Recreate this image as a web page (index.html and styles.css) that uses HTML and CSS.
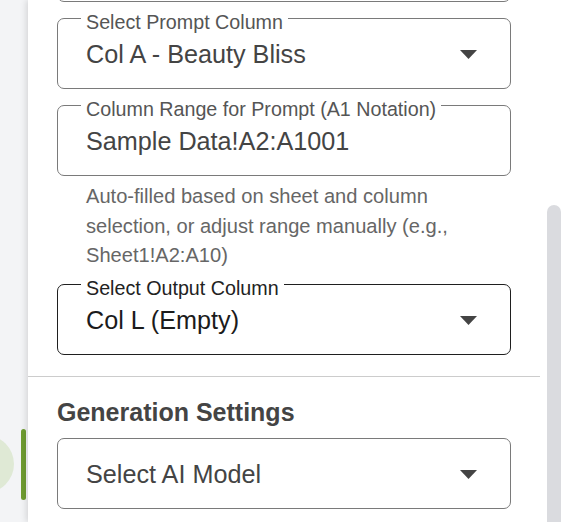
FILE: index.html
```html
<!DOCTYPE html>
<html lang="en">
<head>
<meta charset="utf-8">
<title>Settings panel</title>
<link rel="stylesheet" href="styles.css">
</head>
<body>
<div class="app">
  <aside class="rail">
    <div class="rail-marker">
      <span class="rail-circle"></span>
      <span class="rail-bar"></span>
    </div>
  </aside>
  <main class="panel">
    <div class="content">
      <section class="section">
        <div class="field prev"></div>
        <div class="field">
          <span class="field-label">Select Prompt Column</span>
          <div class="field-value">
            <span>Col A - Beauty Bliss</span>
            <svg class="arrow" width="17" height="9" viewBox="0 0 17 9"><polygon points="0,0 17,0 8.5,9"/></svg>
          </div>
        </div>
        <div class="field">
          <span class="field-label">Column Range for Prompt (A1 Notation)</span>
          <div class="field-value"><span>Sample Data!A2:A1001</span></div>
        </div>
        <p class="helper">Auto-filled based on sheet and column selection, or adjust range manually (e.g., Sheet1!A2:A10)</p>
        <div class="field active">
          <span class="field-label">Select Output Column</span>
          <div class="field-value">
            <span>Col L (Empty)</span>
            <svg class="arrow" width="17" height="9" viewBox="0 0 17 9"><polygon points="0,0 17,0 8.5,9"/></svg>
          </div>
        </div>
      </section>
      <hr class="divider">
      <section class="section">
        <h2 class="heading">Generation Settings</h2>
        <div class="field">
          <div class="field-value">
            <span>Select AI Model</span>
            <svg class="arrow" width="17" height="9" viewBox="0 0 17 9"><polygon points="0,0 17,0 8.5,9"/></svg>
          </div>
        </div>
      </section>
    </div>
    <div class="scroll">
      <div class="thumb"></div>
    </div>
  </main>
</div>
</body>
</html>
```

FILE: styles.css
```css
html, body {
  margin: 0;
  padding: 0;
  width: 562px;
  height: 522px;
  overflow: hidden;
  background: #ffffff;
  font-family: "Liberation Sans", Arial, Helvetica, sans-serif;
}

.app {
  display: flex;
  width: 562px;
  height: 522px;
}

.rail {
  width: 28px;
  flex: 0 0 28px;
  background: #f3f4f6;
  display: flex;
  flex-direction: column;
}

.rail-marker {
  margin-top: 429px;
  display: flex;
  align-items: flex-start;
}

.rail-circle {
  width: 58px;
  height: 58px;
  flex: 0 0 58px;
  margin-left: -44px;
  margin-top: 6px;
  border-radius: 50%;
  background: #dfe9d5;
}

.rail-bar {
  width: 5px;
  height: 71px;
  flex: 0 0 5px;
  margin-left: 7px;
  border-radius: 3px;
  background: #6e9b30;
}

.panel {
  flex: 1;
  display: flex;
  background: #ffffff;
  box-shadow: -2px 0 6px rgba(0, 0, 0, 0.12);
  overflow: hidden;
}

.content {
  width: 512px;
  flex: 0 0 512px;
  display: flex;
  flex-direction: column;
}

.section {
  padding: 0 29px;
  display: flex;
  flex-direction: column;
}

.section:first-child {
  padding-bottom: 21px;
}

.field {
  box-sizing: border-box;
  height: 71px;
  border: 1px solid #7a7a7a;
  border-radius: 7px;
  display: grid;
  grid-template-columns: 1fr;
  grid-template-rows: 1fr;
  margin-top: 16px;
}

.field.prev {
  margin-top: -69px;
}

.field-label {
  grid-area: 1 / 1;
  align-self: start;
  justify-self: start;
  margin: -7px 0 0 23px;
  padding: 0 5px;
  background: #ffffff;
  font-size: 19.7px;
  line-height: 20px;
  color: #555555;
  white-space: nowrap;
}

.field-value {
  grid-area: 1 / 1;
  align-self: center;
  display: flex;
  align-items: center;
  justify-content: space-between;
  padding: 2px 33px 0 28px;
  font-size: 25.2px;
  line-height: 29px;
  color: #444444;
}

.arrow {
  fill: #444444;
  display: block;
}

.field.active {
  border-color: #1f1f1f;
  margin-top: 0;
}

.field.active .field-label {
  color: #222222;
}

.field.active .field-value {
  color: #1b1b1b;
}

.helper {
  margin: 6px 29px 13px;
  font-size: 20.1px;
  line-height: 29.5px;
  color: #666666;
}

.divider {
  margin: 0;
  border: 0;
  height: 1px;
  background: #cccccc;
}

.heading {
  margin: 21px 0 0;
  font-size: 25px;
  line-height: 28px;
  font-weight: bold;
  color: #444444;
}

.section .heading + .field {
  margin-top: 12px;
}

.scroll {
  flex: 1;
  display: flex;
  flex-direction: column;
  padding-top: 205px;
}

.thumb {
  margin-left: 7px;
  width: 14px;
  flex: 1;
  background: #dadbdf;
  border-radius: 7px 7px 0 0;
}
```
